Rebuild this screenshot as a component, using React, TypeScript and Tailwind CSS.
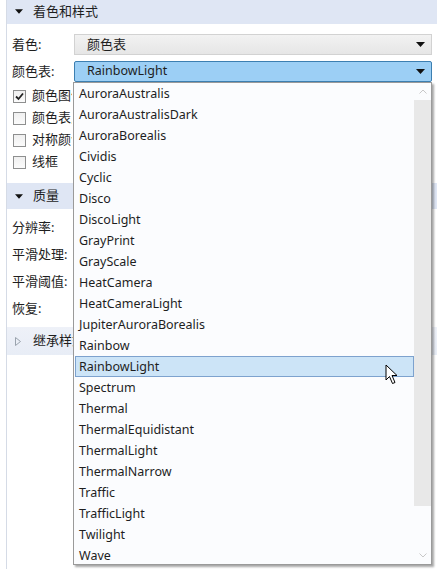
import React from "react";

const items = [
  "AuroraAustralis",
  "AuroraAustralisDark",
  "AuroraBorealis",
  "Cividis",
  "Cyclic",
  "Disco",
  "DiscoLight",
  "GrayPrint",
  "GrayScale",
  "HeatCamera",
  "HeatCameraLight",
  "JupiterAuroraBorealis",
  "Rainbow",
  "RainbowLight",
  "Spectrum",
  "Thermal",
  "ThermalEquidistant",
  "ThermalLight",
  "ThermalNarrow",
  "Traffic",
  "TrafficLight",
  "Twilight",
  "Wave",
];

const font = { fontFamily: '"Noto Sans", "Noto Sans CJK SC", sans-serif' };

function DownTri({ className = "" }: { className?: string }) {
  return (
    <svg width="9" height="5" viewBox="0 0 9 5" className={className}>
      <path d="M0 0 L9 0 L4.5 5 Z" fill="#111" />
    </svg>
  );
}

function Checkbox({ checked }: { checked?: boolean }) {
  return (
    <div className="shrink-0 w-[13px] h-[13px] border border-[#8e8f8f] bg-gradient-to-b from-[#f0f0f0] to-[#fbfbfb] flex items-center justify-center">
      {checked && (
        <svg width="11" height="11" viewBox="0 0 11 11">
          <path d="M2 5.5 L4.5 8 L9 2.5" stroke="#222" strokeWidth="1.8" fill="none" />
        </svg>
      )}
    </div>
  );
}

export default function App() {
  return (
    <div
      className="relative w-[437px] h-[569px] overflow-hidden bg-white text-[13px] text-[#1e1e1e]"
      style={font}
    >
      <div className="ml-[6px] h-full border-l border-[#d5dbe6] flex flex-col">
        {/* header 1 */}
        <div className="h-[24px] bg-[#dfe6f4] flex items-center pb-[1px]">
          <DownTri className="ml-[8px] w-[8px]" />
          <span className="ml-[10px]">着色和样式</span>
        </div>
        <div className="h-[10px]" />
        <div className="h-[21px] flex items-center">
          <span className="ml-[5px] w-[62px]">着色:</span>
          <div className="w-[358px] h-[21px] border border-[#d2d2d2] bg-gradient-to-b from-[#f2f2f2] to-[#e6e6e6] flex items-center justify-between">
            <span className="ml-[12px]">颜色表</span>
            <DownTri className="mr-[6px]" />
          </div>
        </div>
        <div className="h-[6px]" />
        <div className="h-[21px] flex items-center">
          <span className="ml-[5px] w-[62px]">颜色表:</span>
          <div className="w-[358px] h-[21px] border border-[#3c7fb1] rounded-[2px] bg-[#9ccff5] flex items-center justify-between">
            <span className="ml-[12px] text-[12.5px]">RainbowLight</span>
            <DownTri className="mr-[6px]" />
          </div>
        </div>
        <div className="flex flex-col mt-[7px] gap-[8px] ml-[6px]">
          {["颜色图例", "颜色表反转", "对称颜色范围", "线框"].map((t, i) => (
            <div key={t} className="h-[14px] flex items-center gap-[6px]">
              <Checkbox checked={i === 0} />
              <span className="w-[40px] overflow-hidden whitespace-nowrap">{t}</span>
            </div>
          ))}
        </div>
        <div className="h-[14px]" />
        <div className="h-[26px] bg-[#dfe6f4] flex items-center">
          <DownTri className="ml-[8px] w-[8px]" />
          <span className="ml-[10px]">质量</span>
        </div>
        <div className="flex flex-col ml-[5px] mt-[5px]">
          {["分辨率:", "平滑处理:", "平滑阈值:", "恢复:"].map((t) => (
            <div key={t} className="h-[27px] flex items-center">
              {t}
            </div>
          ))}
        </div>
        <div className="h-[5px]" />
        <div className="h-[28px] bg-gradient-to-b from-[#eef1f8] to-[#e8edf6] flex items-center">
          <svg width="6" height="9" viewBox="0 0 6 9" className="ml-[8px] shrink-0">
            <path d="M0.5 0.5 L5.5 4.5 L0.5 8.5 Z" fill="none" stroke="#9aa3ad" />
          </svg>
          <span className="ml-[12px] w-[40px] overflow-hidden whitespace-nowrap">继承样式</span>
        </div>
      </div>

      {/* dropdown list */}
      <div className="absolute left-[73px] top-[82px] w-[359px] h-[483px] bg-[#fbfcfe] border border-[#9a9a9a] shadow-[2px_2px_2px_rgba(0,0,0,0.35)] flex text-[12.5px]">
        <div className="flex-1 flex flex-col pl-[1px]">
          {items.map((t) => (
            <div
              key={t}
              className={
                "h-[21px] shrink-0 flex items-center pt-[1px] " +
                (t === "RainbowLight"
                  ? "bg-[#cce4f7] border border-[#7da2ce] pl-[3px]"
                  : "pl-[4px]")
              }
            >
              {t}
            </div>
          ))}
        </div>
        <div className="w-[17px] flex flex-col">
          <div className="h-[17px] flex items-center justify-center">
            <svg width="8" height="5" viewBox="0 0 8 5">
              <path d="M0.5 4.5 L4 1 L7.5 4.5" stroke="#c8c8c8" fill="none" />
            </svg>
          </div>
          <div className="h-[406px] bg-[#e8e8e8]" />
          <div className="flex-1" />
          <div className="h-[17px] flex items-center justify-center">
            <svg width="8" height="5" viewBox="0 0 8 5">
              <path d="M0.5 0.5 L4 4 L7.5 0.5" stroke="#c8c8c8" fill="none" />
            </svg>
          </div>
        </div>
      </div>

      {/* cursor */}
      <svg
        className="absolute left-[385px] top-[364px]"
        width="14"
        height="22"
        viewBox="0 0 14 22"
      >
        <path
          d="M1 1 L1 16 L4.5 12.5 L7.5 19.5 L10 18.5 L7 11.5 L12 11.5 Z"
          fill="#fff"
          stroke="#000"
          strokeWidth="1"
          strokeLinejoin="round"
        />
      </svg>
    </div>
  );
}
